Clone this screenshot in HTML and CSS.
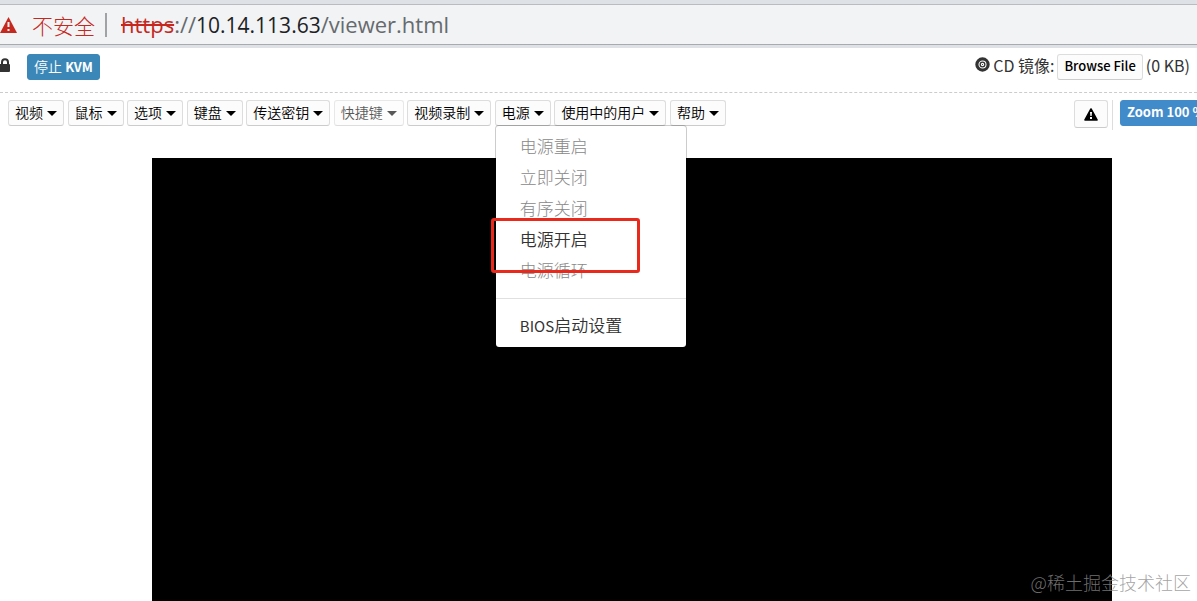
FILE: index.html
```html
<!DOCTYPE html>
<html lang="zh-CN">
<head>
  <meta charset="UTF-8">
  <meta name="viewport" content="width=device-width, initial-scale=1.0">
  <title>KVM Viewer</title>
  <link rel="stylesheet" href="styles.css">
</head>
<body>

  <!-- Address bar -->
  <div class="address-bar">
    <svg class="address-warning" viewBox="0 0 17 16">
      <path d="M8.500 0 L17 16 H0 Z" fill="#c5281f"/>
      <path d="M7.500 5h2v5h-2zM7.500 12h2v2h-2z" fill="#f1f3f4"/>
    </svg>
    <span class="address-status">不安全</span>
    <span class="address-url"><s>https</s>://<b>10.14.113.63</b>/viewer.html</span>
  </div>

  <header class="top-row">
    <svg class="icon-lock" viewBox="0 0 10 14">
      <path d="M2 7V4.200a3 3 0 0 1 6 0V7" fill="none" stroke="#333" stroke-width="2"/>
      <rect x="-1" y="6" width="11" height="8" rx="1" fill="#333"/>
    </svg>
    <button class="btn btn-stop" type="button">停止 <b>KVM</b></button>
    <div class="cd-image">
      <svg class="icon-cd" viewBox="0 0 16 16">
        <circle cx="8" cy="8" r="6" fill="none" stroke="#333" stroke-width="3.400"/>
        <circle cx="8" cy="8" r="2.500" fill="none" stroke="#333" stroke-width="1.400"/>
        <circle cx="8" cy="8" r="0.600" fill="#333"/>
      </svg>
      <span class="cd-text">CD 镜像:</span>
      <button class="btn btn-browse" type="button">Browse File</button>
      <span class="cd-text">(0 KB)</span>
    </div>
  </header>

  <nav class="menu-row">
    <div class="menus">
      <button class="btn menu-btn" type="button">视频<i class="caret"></i></button>
      <button class="btn menu-btn" type="button">鼠标<i class="caret"></i></button>
      <button class="btn menu-btn" type="button">选项<i class="caret"></i></button>
      <button class="btn menu-btn" type="button">键盘<i class="caret"></i></button>
      <button class="btn menu-btn" type="button">传送密钥<i class="caret"></i></button>
      <button class="btn menu-btn" type="button" disabled>快捷键<i class="caret"></i></button>
      <button class="btn menu-btn" type="button">视频录制<i class="caret"></i></button>
      <div class="dropdown">
        <button class="btn menu-btn" type="button" aria-expanded="true">电源<i class="caret"></i></button>
        <div class="dropdown-menu">
          <button class="item" type="button" disabled>电源重启</button>
          <button class="item" type="button" disabled>立即关闭</button>
          <button class="item" type="button" disabled>有序关闭</button>
          <button class="item" type="button">电源开启</button>
          <button class="item" type="button" disabled>电源循环</button>
          <hr class="divider">
          <button class="item" type="button"><span class="latin">BIOS</span>启动设置</button>
          <div class="highlight"></div>
        </div>
      </div>
      <button class="btn menu-btn" type="button">使用中的用户<i class="caret"></i></button>
      <button class="btn menu-btn" type="button">帮助<i class="caret"></i></button>
    </div>
    <div class="tools">
      <button class="btn btn-alert" type="button" aria-label="警告">
        <svg class="icon-alert" viewBox="0 0 14 13">
          <path d="M7 1 L13 12 H1 Z" fill="#000" stroke="#000" stroke-width="1.600" stroke-linejoin="round"/>
          <path d="M6 4h2l-.4 4H6.400zM6 9h2v2H6z" fill="#fff"/>
        </svg>
      </button>
      <div class="zoom-box">
        <button class="btn btn-zoom" type="button">Zoom 100 %</button>
      </div>
    </div>
  </nav>

  <main class="viewer">
    <canvas class="screen"></canvas>
  </main>

  <div class="watermark">@稀土掘金技术社区</div>

</body>
</html>
```

FILE: styles.css
```css
* {
  box-sizing: border-box;
}

body {
  font-family: "Noto Sans CJK SC", sans-serif;
  font-weight: 300;
  margin: 0;
  height: 100vh;
  display: flex;
  flex-direction: column;
  overflow: hidden;
  background-color: #fff;
  color: #333;
}

/* address bar */
.address-bar {
  display: flex;
  align-items: center;
  height: 48px;
  flex: none;
  background-color: #f1f3f4;
  border-top: 4px solid #dee1e6;
  border-bottom: 3px solid #dee1e6;
  box-shadow: inset 0 1px #b9bbbe, inset 0 -1px #a8aaad;
  font-size: 21px;
  line-height: 30px;
}

.address-warning {
  width: 17px;
  height: 16px;
  margin-right: 15px;
}

.address-status {
  color: #c5281f;
  padding-right: 10px;
  border-right: 2px solid #a0a2a5;
  line-height: 24px;
}

.address-url {
  font-family: "Open Sans", "Noto Sans", sans-serif;
  font-size: 22px;
  font-weight: 400;
  margin-left: 14px;
  color: #666a6e;
}

.address-url s {
  color: #c5281f;
}

.address-url b {
  font-size: 21px;
  font-weight: 400;
  color: #202124;
}

/* buttons */
.btn {
  font-family: inherit;
  font-size: 14px;
  font-weight: 350;
  line-height: 20px;
  height: 26px;
  padding: 0 6px 2px;
  color: #000;
  background-color: #fcfcfc;
  border: 1px solid #ddd;
  border-bottom-color: #ccc;
  border-radius: 3px;
  white-space: nowrap;
}

.btn:disabled {
  opacity: 0.65;
}

.caret {
  display: inline-block;
  margin-left: 4px;
  border: 5px solid transparent;
  border-top-color: currentColor;
  border-bottom: 0;
  vertical-align: 2px;
}

/* top row */
.top-row {
  display: flex;
  align-items: center;
  height: 45px;
  flex: none;
  padding-right: 7px;
  padding-bottom: 6px;
  border-bottom: 1px dashed #ccc;
}

.icon-lock {
  width: 10px;
  height: 14px;
  margin: 0 17px 4px 0;
}

.btn-stop {
  color: #fff;
  background-color: #3a87b8;
  border-color: #3a87b8;
}

.btn-stop b {
  font-size: 13px;
  font-weight: 700;
}

.cd-image {
  display: flex;
  align-items: center;
  gap: 3px;
  margin-left: auto;
  font-size: 16px;
  font-weight: 400;
  line-height: 24px;
}

.icon-cd {
  width: 15px;
  height: 15px;
  margin-bottom: 5px;
}

.cd-text {
  padding-bottom: 5px;
}

.btn-browse {
  font-size: 13px;
  font-weight: 500;
}

/* menu row */
.menu-row {
  display: flex;
  justify-content: space-between;
  height: 65px;
  flex: none;
  padding: 7px 0 0 8px;
}

.menus {
  font-size: 16px;
  line-height: 26px;
  white-space: nowrap;
}

.menu-btn {
  vertical-align: top;
}

.dropdown {
  display: inline-block;
  position: relative;
  vertical-align: top;
}

.dropdown-menu {
  position: absolute;
  top: 25px;
  left: 0;
  z-index: 10;
  width: 192px;
  padding: 4px 0 6px;
  background-color: #fff;
  border: 1px solid rgba(0, 0, 0, 0.2);
  border-radius: 4px;
  background-clip: padding-box;
}

.item {
  display: block;
  width: 100%;
  height: 31px;
  padding: 0 24px;
  font: inherit;
  font-size: 17px;
  font-weight: 350;
  text-align: left;
  color: #333;
  background: none;
  border: 0;
}

.item:disabled {
  font-weight: 300;
  color: #888;
}

.latin {
  font-size: 15px;
  font-weight: 400;
}

.divider {
  margin: 13px 0 11px;
  border: 0;
  border-top: 1px solid #e0e0e0;
}

.highlight {
  position: absolute;
  top: 92px;
  left: -5px;
  width: 149px;
  height: 55px;
  border: 3px solid #e8291c;
  border-radius: 3px;
}

.tools {
  display: flex;
  align-items: flex-start;
  width: 123px;
  overflow: hidden;
}

.btn-alert {
  flex: none;
  width: 34px;
  height: 28px;
  margin-right: 4px;
}

.icon-alert {
  display: block;
  width: 14px;
  height: 13px;
  margin: 2px auto 0;
}

.zoom-box {
  height: 30px;
  padding-left: 7px;
  border-left: 1px solid #ddd;
  line-height: 26px;
}

.btn-zoom {
  font-size: 13px;
  font-weight: 700;
  vertical-align: top;
  color: #fff;
  background-color: #428bca;
  border-color: #428bca;
}

/* remote screen */
.viewer {
  display: flex;
  flex: 1;
  min-height: 0;
  padding: 0 85px 0 152px;
}

.screen {
  width: 100%;
  height: 100%;
  background-color: #000;
}

.watermark {
  position: absolute;
  right: 6px;
  bottom: 6px;
  font-size: 18px;
  line-height: 26px;
  color: rgba(140, 140, 140, 0.8);
}
```
